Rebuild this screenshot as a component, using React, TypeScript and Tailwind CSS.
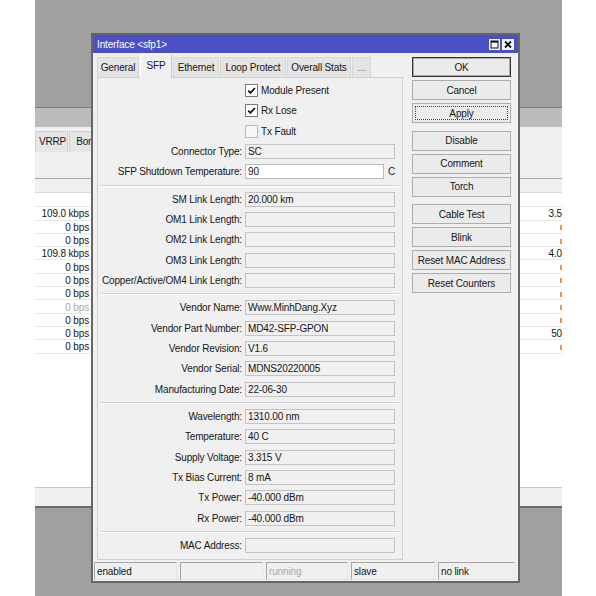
type Row = { label: string; value?: string }

const linkRows: Row[] = [
  { label: "SM Link Length:", value: "20.000 km" },
  { label: "OM1 Link Length:" },
  { label: "OM2 Link Length:" },
  { label: "OM3 Link Length:" },
  { label: "Copper/Active/OM4 Link Length:" },
]

const vendorRows: Row[] = [
  { label: "Vendor Name:", value: "Www.MinhDang.Xyz" },
  { label: "Vendor Part Number:", value: "MD42-SFP-GPON" },
  { label: "Vendor Revision:", value: "V1.6" },
  { label: "Vendor Serial:", value: "MDNS20220005" },
  { label: "Manufacturing Date:", value: "22-06-30" },
]

const statRows: Row[] = [
  { label: "Wavelength:", value: "1310.00 nm" },
  { label: "Temperature:", value: "40 C" },
  { label: "Supply Voltage:", value: "3.315 V" },
  { label: "Tx Bias Current:", value: "8 mA" },
  { label: "Tx Power:", value: "-40.000 dBm" },
  { label: "Rx Power:", value: "-40.000 dBm" },
]

// right column of the window behind is cut by the desktop edge
const bgRows = [
  { l: "", r: "", o: false, g: false },
  { l: "109.0 kbps", r: "3.5", o: false, g: false },
  { l: "0 bps", r: "", o: true, g: false },
  { l: "0 bps", r: "", o: true, g: false },
  { l: "109.8 kbps", r: "4.0", o: false, g: false },
  { l: "0 bps", r: "", o: true, g: false },
  { l: "0 bps", r: "", o: true, g: false },
  { l: "0 bps", r: "", o: true, g: false },
  { l: "0 bps", r: "", o: true, g: true },
  { l: "0 bps", r: "", o: true, g: false },
  { l: "0 bps", r: "50", o: false, g: false },
  { l: "0 bps", r: "", o: true, g: false },
]

const tabs = [
  { name: "General", w: "w-[42px]" },
  { name: "SFP", w: "w-[32px]", active: true },
  { name: "Ethernet", w: "w-[46px]" },
  { name: "Loop Protect", w: "w-[66px]" },
  { name: "Overall Stats", w: "w-[64px]" },
  { name: "...", w: "w-[19px]" },
]

const buttons = [
  { label: "OK", def: true },
  { label: "Cancel" },
  { label: "Apply", focus: true },
  { label: "Disable", gap: true },
  { label: "Comment" },
  { label: "Torch" },
  { label: "Cable Test", gap: true },
  { label: "Blink" },
  { label: "Reset MAC Address" },
  { label: "Reset Counters" },
]

function FieldRow({ label, value }: Row) {
  return (
    <div className="flex h-[15px] items-center">
      <div className="w-[144px] whitespace-nowrap pt-[1px] text-right">{label}</div>
      <div className="ml-[3px] flex h-full w-[150px] items-center border border-[#c3c3c3] bg-[#f0f0f0] px-[2px] pt-[1px] whitespace-nowrap">
        {value}
      </div>
    </div>
  )
}

function Check({ label, checked }: { label: string; checked: boolean }) {
  return (
    <div className="flex h-[15px] items-center pl-[147px]">
      <div
        className={`flex h-[13px] w-[13px] items-center justify-center border ${
          checked ? "border-[#7a7a7a] bg-white" : "border-[#b9b9b9] bg-[#f7f7f7]"
        }`}
      >
        {checked && (
          <svg width="11" height="11" viewBox="0 0 11 11">
            <path d="M2.2 5.6 L4.4 7.9 L8.9 3" fill="none" stroke="#111" strokeWidth="1.7" />
          </svg>
        )}
      </div>
      <span className="ml-[3px] pt-[1px]">{label}</span>
    </div>
  )
}

function Sep() {
  return <div className="mx-[3px] mb-[5px] mt-[5.5px] h-[2px] border-b border-t border-b-white border-t-[#d2d2d2]" />
}

function BackWindow() {
  return (
    <div className="absolute left-0 top-[107px] flex h-[401px] w-[527px] flex-col bg-white">
      <div className="h-[20px] border-t border-[#7a7a7a] bg-[#bcbcbc]" />
      <div className="flex h-[25px] items-end bg-[#f0f0f0]">
        <div className="flex h-[21px] w-[33px] items-center justify-center border border-b-0 border-[#d0d0d0] bg-[#e6e6e6] pl-[2px]">
          VRRP
        </div>
        <div className="ml-[1px] flex h-[21px] w-[50px] items-center justify-center border border-b-0 border-[#d0d0d0] bg-[#e6e6e6]">
          Bonding
        </div>
      </div>
      <div className="h-[26px] bg-[#f0f0f0]" />
      <div className="h-[15px] border-b border-t border-b-[#d8d8d8] border-t-[#a8a8a8] bg-[#f0f0f0]" />
      <div className="flex-1 overflow-hidden bg-white pt-[1px]">
        {bgRows.map((r, i) => (
          <div key={i} className="flex h-[13.3px] items-center border-b border-[#e6e6e6] pt-[2px]">
            <div className={`w-[57px] shrink-0 whitespace-nowrap pr-[3px] text-right ${r.g ? "text-[#a9a9a9]" : ""}`}>
              {r.l}
            </div>
            <div className="w-[456px] shrink-0" />
            {r.o ? (
              <div className="ml-[12px] h-[5px] w-[1.5px] shrink-0 bg-[#e39a3a]" />
            ) : (
              <div className="w-[14px] shrink-0 whitespace-nowrap text-right">{r.r}</div>
            )}
          </div>
        ))}
      </div>
      <div className="h-[21px] border-b-2 border-t border-b-[#6a6a6a] border-t-[#c8c8c8] bg-[#f0f0f0]" />
    </div>
  )
}

function Dialog() {
  return (
    <div className="absolute left-[56px] top-[33px] flex h-[550px] w-[429px] flex-col border-2 border-[#666666] bg-[#f0f0f0]">
      <div className="flex h-[18px] items-center justify-between bg-[#4b50c8] px-[4px] text-white">
        <span className="pt-[1px]">{"Interface <sfp1>"}</span>
        <div className="flex gap-[2px]">
          <svg width="11" height="11" viewBox="0 0 11 11">
            <rect x="0" y="0" width="11" height="11" fill="#f4f4f4" />
            <rect x="2" y="2" width="7" height="7" fill="none" stroke="#111" strokeWidth="1" />
            <rect x="2" y="2" width="7" height="1.6" fill="#111" />
          </svg>
          <svg width="12" height="11" viewBox="0 0 12 11">
            <rect x="0" y="0" width="12" height="11" fill="#f4f4f4" />
            <path d="M3 2.5 L9 8.5 M9 2.5 L3 8.5" stroke="#111" strokeWidth="1.8" />
          </svg>
        </div>
      </div>

      <div className="flex flex-1 pl-[4px]">
        <div className="flex w-[306px] flex-col">
          <div className="flex h-[24px] items-end gap-[1px]">
            {tabs.map((t) =>
              t.active ? (
                <div
                  key={t.name}
                  className={`relative z-10 mb-[-1px] flex h-[24px] ${t.w} items-start justify-center border border-b-0 border-l-white border-r-[#c8c8c8] border-t-white bg-[#f0f0f0] pt-[6px]`}
                >
                  {t.name}
                </div>
              ) : (
                <div
                  key={t.name}
                  className={`flex h-[20px] ${t.w} items-center justify-center border border-b-0 border-[#d6d6d6] bg-[#e4e4e4] pt-[1px] ${
                    t.name === "..." ? "text-[#777]" : ""
                  }`}
                >
                  {t.name}
                </div>
              )
            )}
          </div>
          <div className="flex h-[483px] flex-col border border-[#cfcfcf] pt-[5px]">
            <div className="flex flex-col gap-[5.3px]">
              <Check label="Module Present" checked />
              <Check label="Rx Lose" checked />
              <Check label="Tx Fault" checked={false} />
              <FieldRow label="Connector Type:" value="SC" />
              <div className="flex h-[15px] items-center">
                <div className="w-[144px] whitespace-nowrap pt-[1px] text-right">SFP Shutdown Temperature:</div>
                <div className="ml-[3px] flex h-full w-[139px] items-center border border-[#b9b9b9] bg-white px-[2px] pt-[1px]">
                  90
                </div>
                <span className="ml-[4px] pt-[1px]">C</span>
              </div>
            </div>
            <Sep />
            <div className="flex flex-col gap-[5.3px]">
              {linkRows.map((r) => (
                <FieldRow key={r.label} {...r} />
              ))}
            </div>
            <Sep />
            <div className="flex flex-col gap-[5.3px]">
              {vendorRows.map((r) => (
                <FieldRow key={r.label} {...r} />
              ))}
            </div>
            <Sep />
            <div className="flex flex-col gap-[5.3px]">
              {statRows.map((r) => (
                <FieldRow key={r.label} {...r} />
              ))}
            </div>
            <Sep />
            <FieldRow label="MAC Address:" />
          </div>
        </div>

        <div className="ml-[9px] flex w-[99px] flex-col gap-[3px] pt-[4px]">
          {buttons.map((b) => (
            <div
              key={b.label}
              className={`relative flex h-[20px] items-center justify-center whitespace-nowrap border bg-[#ebebeb] pt-[1px] ${
                b.def ? "border-[#333333] shadow-[inset_0_0_0_1px_#a8a8a8]" : "border-[#adadad]"
              } ${b.gap ? "mt-[4.5px]" : ""}`}
            >
              {b.label}
              {b.focus && <div className="absolute inset-[2px] border border-dotted border-[#444]" />}
            </div>
          ))}
        </div>
      </div>

      <div className="flex h-[20px] items-center gap-[3px] pl-[1px]">
        {[
          { t: "enabled", w: "w-[83px]", c: "" },
          { t: "", w: "w-[83px]", c: "" },
          { t: "running", w: "w-[82px]", c: "text-[#a8a8a8]" },
          { t: "slave", w: "w-[84px]", c: "" },
          { t: "no link", w: "w-[77px]", c: "" },
        ].map((s, i) => (
          <div
            key={i}
            className={`flex h-[18px] ${s.w} items-center border border-b-[#e4e4e4] border-l-[#a5a5a5] border-r-[#e4e4e4] border-t-[#a5a5a5] pl-[2px] pt-[1px] ${s.c}`}
          >
            {s.t}
          </div>
        ))}
      </div>
    </div>
  )
}

export default function App() {
  return (
    <div className="relative h-[596px] w-[596px] overflow-hidden bg-white font-['Liberation_Sans',Arial,sans-serif] text-[10px] leading-none tracking-[-0.15px] text-[#161616]">
      <div className="absolute left-[35px] top-0 h-[596px] w-[527px] overflow-hidden bg-[#a0a0a0]">
        <BackWindow />
        <Dialog />
      </div>
    </div>
  )
}
